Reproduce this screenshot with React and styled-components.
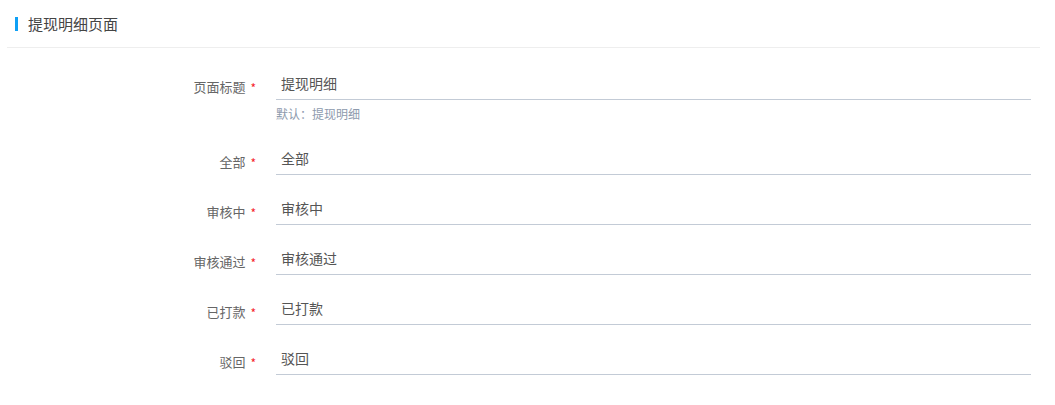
import React from 'react';
import styled, { createGlobalStyle } from 'styled-components';

const GlobalStyle = createGlobalStyle`
  html, body {
    margin: 0;
    padding: 0;
    background: #fff;
    font-family: "Noto Sans CJK SC", "Noto Sans", sans-serif;
  }
`;

const Page = styled.div`
  width: 1055px;
  height: 405px;
  overflow: hidden;
  background: #fff;
`;

const Header = styled.div`
  display: flex;
  align-items: center;
  gap: 10px;
  height: 47px;
  margin: 0 15px 0 7px;
  padding-left: 8px;
  border-bottom: 1px solid #eeeeee;
  box-sizing: content-box;
`;

const Mark = styled.span`
  width: 3px;
  height: 14px;
  background: #0fa0f5;
`;

const Title = styled.h1`
  margin: 0;
  font-size: 15px;
  font-weight: 400;
  color: #444;
  line-height: 20px;
`;

const Form = styled.div`
  padding-top: 20px;
`;

const Row = styled.div`
  display: grid;
  grid-template-columns: 256px 755px;
  column-gap: 20px;
  margin-bottom: 18px;
`;

const Label = styled.label`
  display: flex;
  justify-content: flex-end;
  align-items: center;
  gap: 5px;
  padding-top: 9px;
  height: 20px;
  font-size: 13px;
  color: #666;
  line-height: 20px;
`;

const Required = styled.span`
  color: #f5222d;
  font-size: 12px;
  line-height: 12px;
  padding-top: 2px;
`;

const Field = styled.div`
  display: flex;
  flex-direction: column;
`;

const Input = styled.input`
  box-sizing: border-box;
  height: 32px;
  width: 100%;
  padding: 0 5px;
  padding-bottom: 1px;
  border: none;
  border-bottom: 1px solid #c3cbd6;
  outline: none;
  font-family: inherit;
  font-size: 14px;
  color: #555;
  background: transparent;
`;

const Help = styled.div`
  margin: 5px 0 2px;
  font-size: 12px;
  line-height: 18px;
  color: #8d9aad;
`;

const fields = [
  { label: '页面标题', value: '提现明细', help: '默认：提现明细' },
  { label: '全部', value: '全部' },
  { label: '审核中', value: '审核中' },
  { label: '审核通过', value: '审核通过' },
  { label: '已打款', value: '已打款' },
  { label: '驳回', value: '驳回' },
];

const App = () => (
  <Page>
    <GlobalStyle />
    <Header>
      <Mark />
      <Title>提现明细页面</Title>
    </Header>
    <Form>
      {fields.map((f) => (
        <Row key={f.label}>
          <Label>
            {f.label}
            <Required>*</Required>
          </Label>
          <Field>
            <Input defaultValue={f.value} />
            {f.help && <Help>{f.help}</Help>}
          </Field>
        </Row>
      ))}
    </Form>
  </Page>
);

export default App;
